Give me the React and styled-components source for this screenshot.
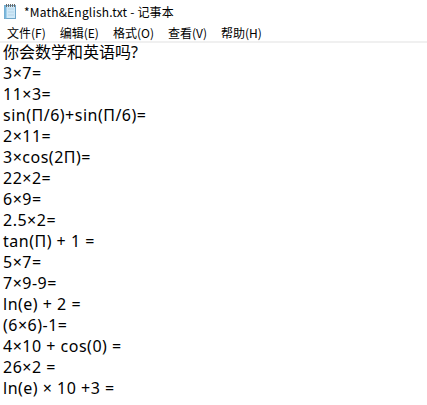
import React from "react";
import styled, { createGlobalStyle } from "styled-components";

const Global = createGlobalStyle`
  html, body { margin: 0; padding: 0; background: #fff; }
  body { font-family: "Noto Sans CJK SC", "Noto Sans", sans-serif; color: #000; }
`;

const Window = styled.div`
  width: 427px;
  height: 405px;
  overflow: hidden;
  background: #fff;
  display: flex;
  flex-direction: column;
`;

const TitleBar = styled.div`
  height: 22px;
  display: flex;
  align-items: center;
  padding-left: 2px;
  gap: 6px;
`;

const TitleText = styled.span`
  font-size: 12px;
  line-height: 14px;
  letter-spacing: 0.2px;
  color: #000;
  margin-top: 2px;
`;

const MenuBar = styled.div`
  height: 19px;
  display: flex;
  align-items: center;
  border-bottom: 2px solid #f0f0f0;
`;

const MenuItem = styled.span`
  font-size: 12px;
  line-height: 14px;
  padding: 0 7px;
  color: #000;
  margin-top: 3px;
`;

const Editor = styled.div`
  padding: 0 0 0 3px;
  font-size: 16px;
  line-height: 21px;
  display: flex;
  flex-direction: column;
  margin-top: -1px;
`;

const Line = styled.div`
  white-space: pre;
  height: 21px;
  letter-spacing: ${(p) => (p.$cjk ? "0" : "0.5px")};
  font-family: "Noto Sans", "Noto Sans CJK SC", sans-serif;
`;

const NotepadIcon = () => (
  <svg width="16" height="16" viewBox="0 0 16 16">
    <rect x="2.5" y="2.5" width="11" height="13" fill="#cfe8f7" stroke="#6fa6c9" />
    <rect x="2.5" y="2.5" width="2" height="13" fill="#7ab8de" />
    <line x1="6" y1="6" x2="12" y2="6" stroke="#b5d3e6" />
    <line x1="6" y1="9" x2="12" y2="9" stroke="#b5d3e6" />
    <line x1="6" y1="12" x2="12" y2="12" stroke="#b5d3e6" />
    {[4, 6, 8, 10, 12].map((x) => (
      <rect key={x} x={x} y="1" width="1" height="3" fill="#6a6a6a" />
    ))}
  </svg>
);

const lines = [
  "你会数学和英语吗?",
  "3×7=",
  "11×3=",
  "sin(Π/6)+sin(Π/6)=",
  "2×11=",
  "3×cos(2Π)=",
  "22×2=",
  "6×9=",
  "2.5×2=",
  "tan(Π) + 1 =",
  "5×7=",
  "7×9-9=",
  "ln(e) + 2 =",
  "(6×6)-1=",
  "4×10 + cos(0) =",
  "26×2 =",
  "ln(e) × 10 +3 =",
];

export default function App() {
  return (
    <Window>
      <Global />
      <TitleBar>
        <NotepadIcon />
        <TitleText>*Math&amp;English.txt - 记事本</TitleText>
      </TitleBar>
      <MenuBar>
        {["文件(F)", "编辑(E)", "格式(O)", "查看(V)", "帮助(H)"].map((m) => (
          <MenuItem key={m}>{m}</MenuItem>
        ))}
      </MenuBar>
      <Editor>
        {lines.map((l, i) => (
          <Line key={i} $cjk={i === 0}>{l}</Line>
        ))}
      </Editor>
    </Window>
  );
}
